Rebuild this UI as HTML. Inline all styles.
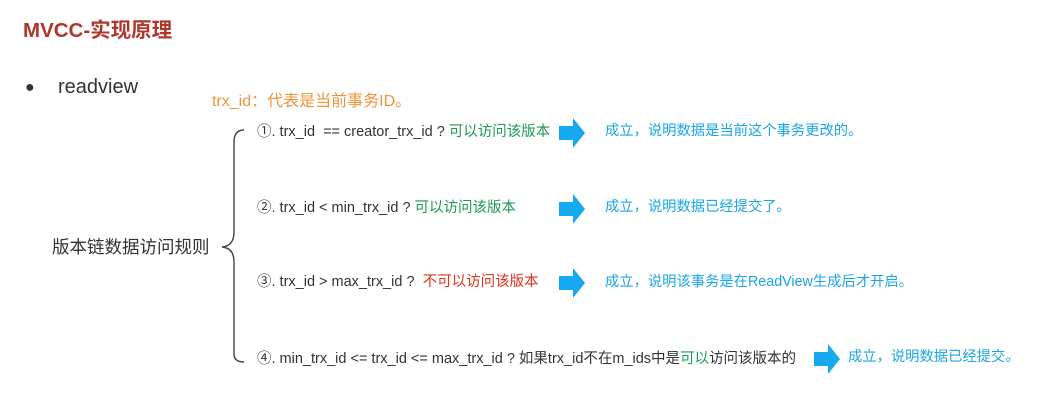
<html><head><style>
body{margin:0;width:1054px;height:414px;background:#fff;position:relative;font-family:"Liberation Sans","Noto Sans CJK SC",sans-serif;overflow:hidden}
.a{position:absolute;white-space:nowrap;font-size:14.5px;color:#333;line-height:18px}
.g{color:#1e9a55}.r{color:#e0321e}.b{color:#1aa6e6;font-size:14.3px}
svg{position:absolute}
</style></head><body>
<div class="a" style="left:23px;top:18px;font-size:20.5px;line-height:26px;font-weight:bold;color:#b0362a">MVCC-实现原理</div>
<div class="a" style="left:25px;top:80px;font-size:16px;line-height:16px">●</div>
<div class="a" style="left:58px;top:76px;font-size:20px;line-height:22px;color:#333">readview</div>
<div class="a" style="left:212px;top:93px;font-size:16px;color:#f0943c">trx_id：代表是当前事务ID。</div>
<div class="a" style="left:52px;top:237px;font-size:17.5px;line-height:20px">版本链数据访问规则</div>
<svg width="40" height="250" style="left:214px;top:122px"><path d="M30 8 Q20 8 20 20 L20 110 Q20 124 8 125 Q20 126 20 140 L20 232 Q20 240 30 240" fill="none" stroke="#444" stroke-width="1.4"/></svg>
<div class="a" style="left:257px;top:123px">①. trx_id&nbsp; == creator_trx_id ? <span class="g">可以访问该版本</span></div>
<div class="a" style="left:257px;top:199px">②. trx_id &lt; min_trx_id ? <span class="g">可以访问该版本</span></div>
<div class="a" style="left:257px;top:273px">③. trx_id &gt; max_trx_id ?&nbsp; <span class="r">不可以访问该版本</span></div>
<div class="a" style="left:257px;top:350px">④. min_trx_id &lt;= trx_id &lt;= max_trx_id ? 如果trx_id不在m_ids中是<span class="g">可以</span>访问该版本的</div>
<svg width="30" height="30" style="left:559px;top:118px"><path d="M0 8H14V0L26 15L14 30V22H0Z" fill="#17a9f0"/></svg>
<svg width="30" height="30" style="left:559px;top:194px"><path d="M0 8H14V0L26 15L14 30V22H0Z" fill="#17a9f0"/></svg>
<svg width="30" height="30" style="left:559px;top:268px"><path d="M0 8H14V0L26 15L14 30V22H0Z" fill="#17a9f0"/></svg>
<svg width="30" height="30" style="left:814px;top:344px"><path d="M0 8H14V0L26 15L14 30V22H0Z" fill="#17a9f0"/></svg>
<div class="a b" style="left:605px;top:122px">成立，说明数据是当前这个事务更改的。</div>
<div class="a b" style="left:605px;top:198px">成立，说明数据已经提交了。</div>
<div class="a b" style="left:605px;top:273px">成立，说明该事务是在ReadView生成后才开启。</div>
<div class="a b" style="left:848px;top:348px">成立，说明数据已经提交。</div>
</body></html>
